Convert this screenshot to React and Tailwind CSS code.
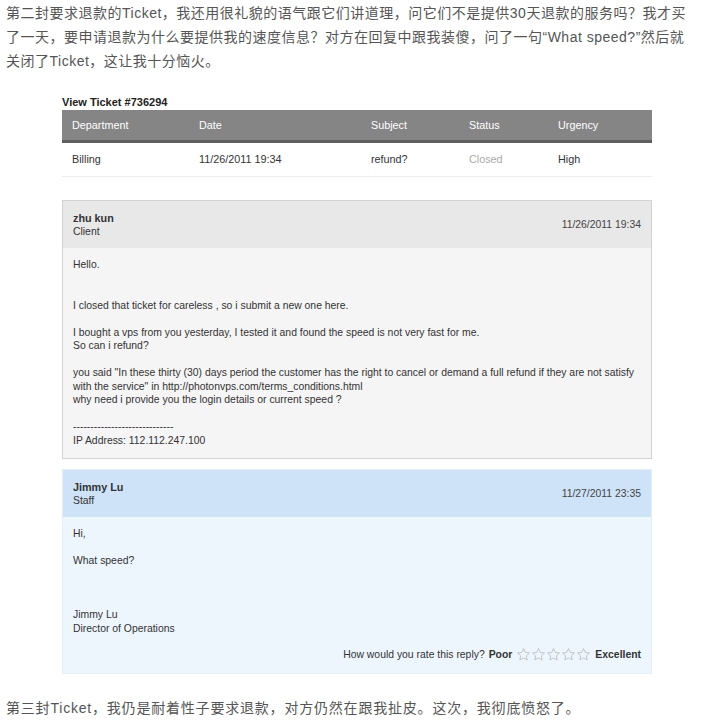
const sans = { fontFamily: '"Liberation Sans", Arial, sans-serif' };

function Star() {
  return (
    <svg width="15" height="15" viewBox="0 0 24 24" className="block">
      <path
        d="M12 2.5l2.9 6.2 6.6.8-4.9 4.6 1.3 6.6L12 17.4l-5.9 3.3 1.3-6.6-4.9-4.6 6.6-.8z"
        fill="none"
        stroke="#b9b9b9"
        strokeWidth="1.3"
        strokeLinejoin="round"
      />
    </svg>
  );
}

function Lines({ lines }) {
  return (
    <div className="leading-[13.5px]">
      {lines.map((line, i) => (
        <div key={i} className="min-h-[13.5px] whitespace-nowrap">{line}</div>
      ))}
    </div>
  );
}

function Message({ name, role, date, head, body, border, children }) {
  return (
    <div className={`border ${border}`}>
      <div className={`flex items-center justify-between px-[10px] ${head} h-[47px]`}>
        <div className="leading-[14px]">
          <div className="text-[10.8px] font-bold text-[#333]">{name}</div>
          <div className="text-[#333]">{role}</div>
        </div>
        <div className="text-[#444]">{date}</div>
      </div>
      <div className={`px-[10px] pt-[10px] pb-[11px] ${body}`}>{children}</div>
    </div>
  );
}

export default function App() {
  const cjk = { fontFamily: '"Liberation Sans", "Noto Sans CJK SC", sans-serif' };
  return (
    <div className="min-h-[725px] w-[714px] bg-white" style={sans}>
      <div className="pl-[6px] pt-[1px] text-[14px] leading-[24px] tracking-[0.5px] text-[#555]" style={cjk}>
        <div className="whitespace-nowrap">第二封要求退款的Ticket，我还用很礼貌的语气跟它们讲道理，问它们不是提供30天退款的服务吗？我才买</div>
        <div className="whitespace-nowrap">了一天，要申请退款为什么要提供我的速度信息？对方在回复中跟我装傻，问了一句“What speed?”然后就</div>
        <div className="whitespace-nowrap">关闭了Ticket，这让我十分恼火。</div>
      </div>

      <div className="ml-[62px] w-[590px] text-[10.4px] text-[#333]">
        <div className="mt-[22px] text-[11px] font-bold leading-[14px] text-[#222]">View Ticket #736294</div>

        <div className="mt-[1px] text-[10.8px]">
          <div className="grid h-[33px] grid-cols-[127px_172px_98px_89px_1fr] items-center border-b-[3px] border-[#5f5f5f] bg-[#858585] pl-[10px] text-white">
            <div>Department</div>
            <div>Date</div>
            <div>Subject</div>
            <div>Status</div>
            <div>Urgency</div>
          </div>
          <div className="grid h-[34px] grid-cols-[127px_172px_98px_89px_1fr] items-center border-b border-[#ececec] pl-[10px] text-[#333]">
            <div>Billing</div>
            <div>11/26/2011 19:34</div>
            <div>refund?</div>
            <div className="text-[#aaa]">Closed</div>
            <div>High</div>
          </div>
        </div>

        <div className="mt-[23px]">
          <Message
            name="zhu kun"
            role="Client"
            date="11/26/2011 19:34"
            head="bg-[#e8e8e8]"
            body="bg-[#f5f5f5]"
            border="border-[#d2d2d2]"
          >
            <Lines
              lines={[
                'Hello.',
                '',
                '',
                'I closed that ticket for careless , so i submit a new one here.',
                '',
                'I bought a vps from you yesterday, I tested it and found the speed is not very fast for me.',
                'So can i refund?',
                '',
                'you said "In these thirty (30) days period the customer has the right to cancel or demand a full refund if they are not satisfy',
                'with the service" in http://photonvps.com/terms_conditions.html',
                'why need i provide you the login details or current speed ?',
                '',
                '-----------------------------',
                'IP Address: 112.112.247.100',
              ]}
            />
          </Message>
        </div>

        <div className="mt-[10px]">
          <Message
            name="Jimmy Lu"
            role="Staff"
            date="11/27/2011 23:35"
            head="bg-[#cfe3f8]"
            body="bg-[#eef6fd]"
            border="border-[#e3eef9]"
          >
            <Lines
              lines={['Hi,', '', 'What speed?', '', '', '', 'Jimmy Lu', 'Director of Operations']}
            />
            <div className="mt-[12px] flex items-center justify-end gap-[4px] leading-[14px]">
              <span className="text-[#333]">How would you rate this reply?</span>
              <span className="font-bold text-[#333]">Poor</span>
              <span className="flex">
                <Star />
                <Star />
                <Star />
                <Star />
                <Star />
              </span>
              <span className="font-bold text-[#333]">Excellent</span>
            </div>
          </Message>
        </div>
      </div>

      <div className="mt-[22px] whitespace-nowrap pl-[6px] text-[14px] leading-[24px] tracking-[0.8px] text-[#555]" style={cjk}>
        第三封Ticket，我仍是耐着性子要求退款，对方仍然在跟我扯皮。这次，我彻底愤怒了。
      </div>
    </div>
  );
}
